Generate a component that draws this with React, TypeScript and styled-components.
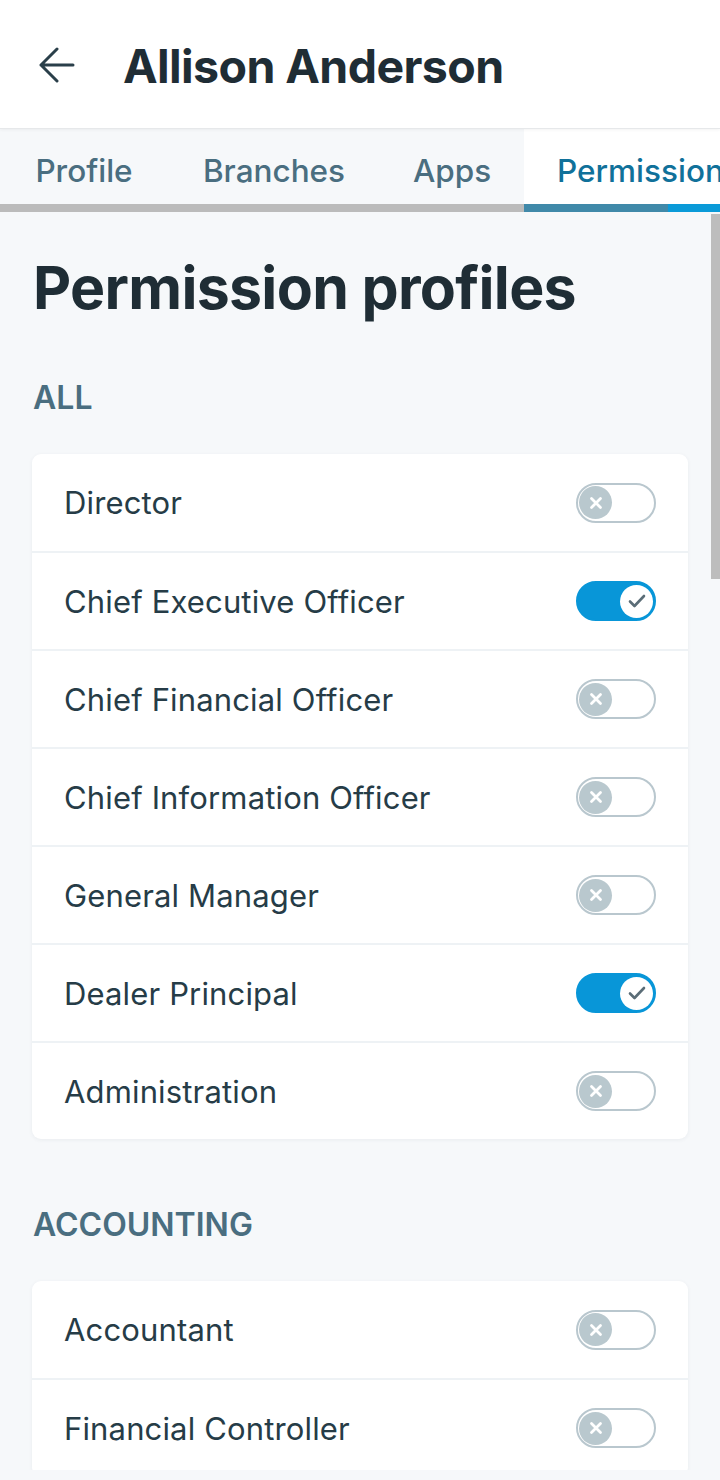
import React from 'react'
import styled, { createGlobalStyle } from 'styled-components'

const Global = createGlobalStyle`
  html, body {
    margin: 0;
    padding: 0;
    background: #f6f8fa;
    font-family: Inter, "Noto Sans", sans-serif;
    -webkit-font-smoothing: antialiased;
  }
  * { box-sizing: border-box; }
`

const Screen = styled.div`
  width: 720px;
  height: 1470px;
  display: flex;
  flex-direction: column;
  overflow: hidden;
  background: #f6f8fa;
`

const Header = styled.header`
  height: 129px;
  flex-shrink: 0;
  display: flex;
  align-items: center;
  gap: 48px;
  padding: 0 0 0 39px;
  background: white;
  border-bottom: 1px solid #e6e8ea;
  box-shadow: 0 1px 3px rgba(0, 0, 0, 0.05);
  position: relative;
  z-index: 1;
`

const BackButton = styled.button`
  display: flex;
  padding: 0;
  border: none;
  background: none;
  margin-top: 2px;
`

const Name = styled.h1`
  margin: 4px 0 0;
  font-size: 46.5px;
  font-weight: 700;
  letter-spacing: -0.6px;
  color: #1f2d35;
`

const Tabs = styled.nav`
  height: 83px;
  flex-shrink: 0;
  display: flex;
  border-bottom: 8px solid #bbbbbb;
  position: relative;
`

const Tab = styled.div<{ $active?: boolean; $width?: number }>`
  display: flex;
  align-items: center;
  justify-content: ${p => (p.$active ? 'flex-start' : 'center')};
  width: ${p => (p.$width ? `${p.$width}px` : 'auto')};
  padding: 8px 0 0 ${p => (p.$active ? '33px' : '0')};
  background: ${p => (p.$active ? 'white' : 'transparent')};
  color: ${p => (p.$active ? '#10719a' : '#4a6e80')};
  font-size: 31.5px;
  font-weight: 500;
  white-space: nowrap;
  flex-shrink: ${p => (p.$active ? 1 : 0)};
  flex-grow: ${p => (p.$active ? 1 : 0)};
  min-width: 0;
  overflow: hidden;
`

const Indicator = styled.div`
  position: absolute;
  left: 524px;
  right: 0;
  bottom: -8px;
  height: 8px;
  background: linear-gradient(to right, #4089a9 0 144px, #0a9ad8 144px);
`

const Body = styled.main`
  flex: 1;
  position: relative;
  padding: 36px 32px 0;
  overflow: hidden;
`

const Thumb = styled.div`
  position: absolute;
  right: 0;
  top: 2px;
  width: 9px;
  height: 365px;
  background: #bdbdbd;
`

const Title = styled.h2`
  margin: 0 0 0 1px;
  font-size: 59px;
  line-height: 80px;
  font-weight: 700;
  letter-spacing: -0.7px;
  color: #1f2d35;
`

const SectionLabel = styled.h3<{ $first?: boolean }>`
  margin: ${p => (p.$first ? '50px' : '66px')} 0 0 1px;
  font-size: 32px;
  line-height: 40px;
  font-weight: 600;
  color: #4a6e80;
  text-transform: uppercase;
`

const Card = styled.section`
  margin-top: 36px;
  background: white;
  border-radius: 9px;
  box-shadow: 0 1px 4px rgba(30, 50, 60, 0.06);
  overflow: hidden;
`

const Row = styled.div`
  height: 98px;
  display: flex;
  align-items: center;
  justify-content: space-between;
  padding: 0 32px;
  border-top: 2px solid #eef2f5;
  &:first-child {
    border-top: none;
    height: 97px;
  }
`

const Label = styled.span`
  font-size: 31px;
  letter-spacing: 0.15px;
  color: #263c47;
`

const Switch = styled.div<{ $on?: boolean }>`
  width: 80px;
  height: 40px;
  border-radius: 20px;
  border: 2px solid ${p => (p.$on ? '#0896d8' : '#b9c7ce')};
  background: ${p => (p.$on ? '#0896d8' : 'white')};
  display: flex;
  align-items: center;
  justify-content: ${p => (p.$on ? 'flex-end' : 'flex-start')};
  padding: 0 1px;
`

const Knob = styled.div<{ $on?: boolean }>`
  width: 33px;
  height: 33px;
  border-radius: 50%;
  background: ${p => (p.$on ? 'white' : '#b9c8ce')};
  display: flex;
  align-items: center;
  justify-content: center;
`

function Toggle({ on }: { on?: boolean }) {
  return (
    <Switch $on={on}>
      <Knob $on={on}>
        {on ? (
          <svg width="18" height="14" viewBox="0 0 18 14">
            <path d="M2 7.5 L6.5 12 L16 2" fill="none" stroke="#5b6d77" strokeWidth="2.6" strokeLinecap="round" strokeLinejoin="round" />
          </svg>
        ) : (
          <svg width="14" height="14" viewBox="0 0 14 14">
            <path d="M2.5 2.5 L11.5 11.5 M11.5 2.5 L2.5 11.5" stroke="white" strokeWidth="2.8" strokeLinecap="round" />
          </svg>
        )}
      </Knob>
    </Switch>
  )
}

const sections = [
  {
    name: 'All',
    items: [
      ['Director', false],
      ['Chief Executive Officer', true],
      ['Chief Financial Officer', false],
      ['Chief Information Officer', false],
      ['General Manager', false],
      ['Dealer Principal', true],
      ['Administration', false],
    ],
  },
  {
    name: 'Accounting',
    items: [
      ['Accountant', false],
      ['Financial Controller', false],
    ],
  },
] as { name: string; items: [string, boolean][] }[]

export default function App() {
  return (
    <Screen>
      <Global />
      <Header>
        <BackButton>
          <svg width="36" height="36" viewBox="0 0 36 36">
            <path d="M2 18 H34 M18 2 L2 18 L18 34" fill="none" stroke="#2a3f4a" strokeWidth="3" strokeLinecap="round" strokeLinejoin="round" />
          </svg>
        </BackButton>
        <Name>Allison Anderson</Name>
      </Header>
      <Tabs>
        <Tab $width={168}>Profile</Tab>
        <Tab $width={212}>Branches</Tab>
        <Tab $width={144}>Apps</Tab>
        <Tab $active>Permissions</Tab>
        <Indicator />
      </Tabs>
      <Body>
        <Thumb />
        <Title>Permission profiles</Title>
        {sections.map((s, i) => (
          <React.Fragment key={i}>
            <SectionLabel $first={i === 0}>{s.name}</SectionLabel>
            <Card>
              {s.items.map(([label, on], j) => (
                <Row key={j}>
                  <Label>{label}</Label>
                  <Toggle on={on} />
                </Row>
              ))}
            </Card>
          </React.Fragment>
        ))}
      </Body>
    </Screen>
  )
}
